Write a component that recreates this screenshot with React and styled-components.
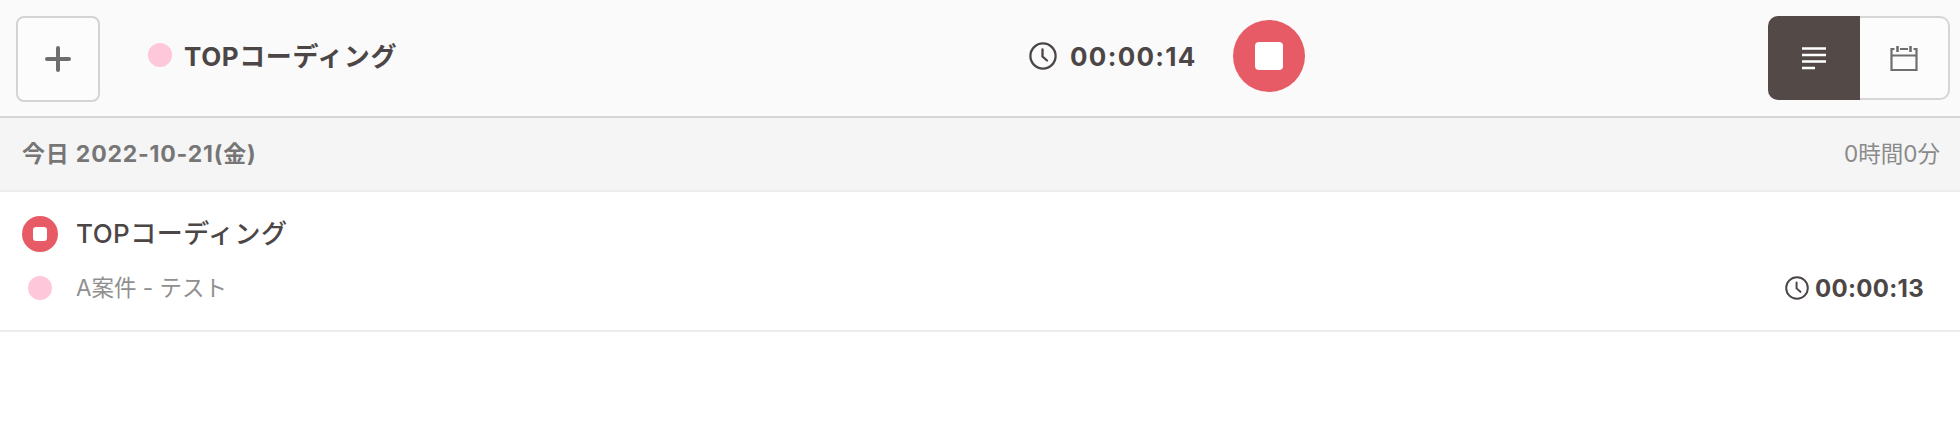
import React from "react";
import styled, { createGlobalStyle } from "styled-components";

const GlobalStyle = createGlobalStyle`
  html, body {
    margin: 0;
    padding: 0;
    background: #fff;
    font-family: Inter, "Noto Sans CJK JP", sans-serif;
  }
`;

const Page = styled.div`
  width: 1960px;
  height: 448px;
  overflow: hidden;
`;

const Header = styled.header`
  display: grid;
  grid-template-columns: 1013px auto 1fr;
  align-items: center;
  height: 116px;
  padding: 0 10px 0 16px;
  background: #fafafa;
  border-bottom: 2px solid #d6d6d6;
`;

const HeaderLeft = styled.div`
  display: flex;
  align-items: center;
`;

const AddButton = styled.button`
  display: flex;
  align-items: center;
  justify-content: center;
  width: 84px;
  height: 86px;
  margin: 1px 48px 0 0;
  padding: 0;
  background: #fcfcfc;
  border: 2px solid #d4d4d4;
  border-radius: 8px;
`;

const Dot = styled.span`
  flex: none;
  width: ${(props) => props.$size}px;
  height: ${(props) => props.$size}px;
  border-radius: 50%;
  background: #fec7da;
`;

const CurrentTitle = styled.div`
  margin: -7px 0 0 12px;
  font-size: 26px;
  font-weight: 700;
  letter-spacing: 0.6px;
  color: #4c4646;
  white-space: nowrap;
`;

const CurrentDot = styled(Dot)`
  margin-top: -6px;
`;

const TimerGroup = styled.div`
  display: flex;
  align-items: center;
`;

const Elapsed = styled.div`
  display: flex;
  align-items: center;
  gap: ${(props) => props.$gap}px;
  font-size: ${(props) => props.$fontSize}px;
  letter-spacing: ${(props) => props.$spacing}px;
  font-weight: 700;
  color: #4c4646;
  white-space: nowrap;
`;

const HeaderElapsed = styled(Elapsed)`
  margin-top: -4px;
`;

const StopButton = styled.button`
  display: flex;
  align-items: center;
  justify-content: center;
  width: 72px;
  height: 72px;
  margin: -4px 0 0 36px;
  padding: 0;
  background: #e75b67;
  border: none;
  border-radius: 50%;
`;

const StopSquare = styled.span`
  display: block;
  width: 28px;
  height: 28px;
  background: #fff;
  border-radius: 4px;
`;

const ViewToggle = styled.div`
  justify-self: end;
  display: flex;
  width: 182px;
  height: 84px;
  box-sizing: border-box;
  background: #fcfcfc;
  border: 2px solid #d6d6d6;
  border-radius: 10px;
`;

const ToggleItem = styled.div`
  display: flex;
  align-items: center;
  justify-content: center;
  ${(props) => (props.$active ? "width: 92px;" : "flex: 1;")}
  margin: ${(props) => (props.$active ? "-2px 0 -2px -2px" : "0")};
  background: ${(props) => (props.$active ? "#534a48" : "transparent")};
  border-radius: ${(props) => (props.$active ? "10px 0 0 10px" : "0 8px 8px 0")};
`;

const DayBar = styled.div`
  display: flex;
  align-items: center;
  justify-content: space-between;
  height: 74px;
  padding: 0 20px 4px 22px;
  box-sizing: border-box;
  background: #f5f5f5;
  border-bottom: 2px solid #ececec;
`;

const DayLabel = styled.div`
  font-size: 23px;
  font-weight: 700;
  letter-spacing: 0.8px;
  color: #767676;
`;

const DayTotal = styled.div`
  font-size: 22.5px;
  color: #8a8a8a;
`;

const Entry = styled.div`
  display: flex;
  flex-direction: column;
  height: 138px;
  padding: 0 36px 0 22px;
  border-bottom: 2px solid #ececec;
`;

const EntryRow = styled.div`
  display: flex;
  align-items: center;
  height: ${(props) => props.$height}px;
  margin-top: ${(props) => props.$top}px;
`;

const MiniStop = styled.span`
  flex: none;
  display: flex;
  align-items: center;
  justify-content: center;
  width: 36px;
  height: 36px;
  margin-right: 18px;
  background: #e75b67;
  border-radius: 50%;
`;

const MiniSquare = styled.span`
  display: block;
  width: 14px;
  height: 14px;
  background: #fff;
  border-radius: 3px;
`;

const EntryTitle = styled.div`
  margin-top: -5px;
  font-size: 26px;
  font-weight: 500;
  letter-spacing: 0.5px;
  color: #4c4646;
`;

const EntryDot = styled(Dot)`
  margin: 0 24px 0 6px;
`;

const EntrySub = styled.div`
  flex: 1;
  margin-top: -4px;
  font-size: 22.5px;
  color: #8f8f8f;
`;

const ClockIcon = ({ size }) => (
  <svg width={size} height={size} viewBox="0 0 28 28" fill="none" stroke="#4c4646" strokeWidth="2.3" strokeLinecap="round">
    <circle cx="14" cy="14" r="12.6" />
    <path d="M13.5 7.5v7l4.5 4" />
  </svg>
);

const App = () => (
  <Page>
    <GlobalStyle />
    <Header>
      <HeaderLeft>
        <AddButton aria-label="追加">
          <svg width="26" height="26" viewBox="0 0 26 26" stroke="#6e6e6e" strokeWidth="4" strokeLinecap="round">
            <path d="M13 2v22M2 13h22" />
          </svg>
        </AddButton>
        <CurrentDot $size={24} />
        <CurrentTitle>TOPコーディング</CurrentTitle>
      </HeaderLeft>
      <TimerGroup>
        <HeaderElapsed $gap={13} $fontSize={26} $spacing={1.3}>
          <ClockIcon size={28} />
          00:00:14
        </HeaderElapsed>
        <StopButton aria-label="停止">
          <StopSquare />
        </StopButton>
      </TimerGroup>
      <ViewToggle>
        <ToggleItem $active>
          <svg width="26" height="26" viewBox="0 0 26 26" stroke="#fff" strokeWidth="2.4">
            <path d="M1 3.5h24M1 10h24M1 16.500h24M1 23h13" />
          </svg>
        </ToggleItem>
        <ToggleItem>
          <svg width="28" height="26" viewBox="0 0 28 26" fill="none" stroke="#6e6e6e" strokeWidth="2.2">
            <path d="M4.500 4H1.500v21h25V4h-3M10 4h8M1.500 10.500h25" />
            <path d="M7.500 1v6M20.500 1v6" strokeWidth="2.600" />
          </svg>
        </ToggleItem>
      </ViewToggle>
    </Header>
    <DayBar>
      <DayLabel>今日 2022-10-21(金)</DayLabel>
      <DayTotal>0時間0分</DayTotal>
    </DayBar>
    <Entry>
      <EntryRow $height={70} $top={7}>
        <MiniStop>
          <MiniSquare />
        </MiniStop>
        <EntryTitle>TOPコーディング</EntryTitle>
      </EntryRow>
      <EntryRow $height={44} $top={-3}>
        <EntryDot $size={24} />
        <EntrySub>A案件 - テスト</EntrySub>
        <Elapsed $gap={6} $fontSize={24} $spacing={0.3}>
          <ClockIcon size={24} />
          00:00:13
        </Elapsed>
      </EntryRow>
    </Entry>
  </Page>
);

export default App;
